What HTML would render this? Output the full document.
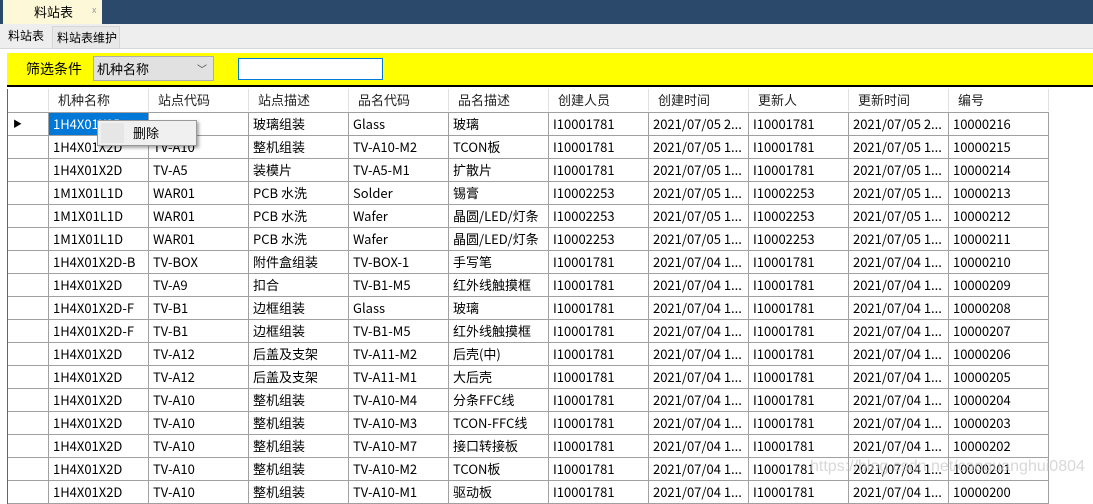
<!DOCTYPE html>
<html><head><meta charset="utf-8"><style>
*{margin:0;padding:0;box-sizing:border-box}
body{width:1093px;height:492px;overflow:hidden;background:#fff;font-family:"Noto Sans CJK SC","Liberation Sans",sans-serif;font-size:13px;color:#000;position:relative}
.top{position:absolute;left:0;top:0;width:1093px;height:24px;background:#2b4a6b}
.tab{position:absolute;left:3px;top:0;width:99px;height:24px;background:#fdf8d8;font-size:13px}
.tab span{position:absolute;left:31px;top:0;line-height:24px}
.tab i{position:absolute;left:89px;top:3px;font-style:normal;font-size:9px;color:#999}
.strip{position:absolute;left:0;top:24px;width:1093px;height:25px;background:#eeeeee;border-bottom:1px solid #d8d8d8}
.t1{position:absolute;left:8px;top:25px;font-size:12px;line-height:22px}
.t2{position:absolute;left:52px;top:26px;width:68px;height:23px;border:1px solid #d6d6d6;background:#e8e8e8;font-size:12px;line-height:21px;padding-left:4px}
.yel{position:absolute;left:7px;top:53px;width:1086px;height:34px;background:#ffff00;border-bottom:2px solid #000}
.lbl{position:absolute;left:26px;top:58px;font-size:14px;line-height:22px}
.sel{position:absolute;left:93px;top:56px;width:121px;height:25px;background:#e1e1e1;border:1px solid #adadad;font-size:13px;line-height:23px;padding-left:3px}
.sel b{position:absolute;right:6px;top:0;font-weight:normal;font-size:10px;color:#444}
.inp{position:absolute;left:238px;top:58px;width:145px;height:22px;background:#fff;border:1px solid #0078d7}
.grid{position:absolute;left:7px;top:89px;width:1042px;border-left:1px solid #666}
.row{position:relative;height:23px;border-bottom:1px solid #a0a0a0}
.row div{position:absolute;top:0;height:22px;line-height:22px;padding-left:4px;white-space:nowrap;overflow:hidden;border-right:1px solid #a0a0a0}
.hdr{height:24px;border-bottom:1px solid #a0a0a0}
.hdr div{border-right:1px solid #e0e0e0;padding-left:9px;color:#222}
.c0{left:0;width:41px}.c1{left:41px;width:100px}.c2{left:141px;width:100px}.c3{left:241px;width:100px}.c4{left:341px;width:100px}.c5{left:441px;width:100px}.c6{left:541px;width:100px}.c7{left:641px;width:100px}.c8{left:741px;width:100px}.c9{left:841px;width:100px}.c10{left:941px;width:100px}
.sel1{background:#0078d7;color:#fff}
.menu{position:absolute;left:97px;top:120px;width:100px;height:26px;background:#f0f0f0;border:1px solid #999;box-shadow:2px 2px 3px rgba(0,0,0,.35);font-size:13px}
.menu span{position:absolute;left:35px;top:0;line-height:24px}
.menu i{position:absolute;left:3px;top:2px;width:23px;height:20px;background:#e6e6e6}
.wm{position:absolute;left:810px;top:458px;color:rgba(200,200,200,.7);font-size:16px;font-family:"Liberation Sans",sans-serif}
</style></head><body>
<div class="top"><div class="tab"><span>料站表</span><i>x</i></div></div>
<div class="strip"></div>
<div class="t1">料站表</div><div class="t2">料站表维护</div>
<div class="yel"></div>
<div class="lbl">筛选条件</div>
<div class="sel">机种名称<b>﹀</b></div>
<div class="inp"></div>
<div class="grid">
<div class="row hdr"><div class="c0"></div><div class="c1">机种名称</div><div class="c2">站点代码</div><div class="c3">站点描述</div><div class="c4">品名代码</div><div class="c5">品名描述</div><div class="c6">创建人员</div><div class="c7">创建时间</div><div class="c8">更新人</div><div class="c9">更新时间</div><div class="c10">编号</div></div>
<div class="row"><div class="c0" style="padding-left:5px;font-size:9px">▶</div><div class="c1 sel1">1H4X01X2D</div><div class="c2"></div><div class="c3">玻璃组装</div><div class="c4">Glass</div><div class="c5">玻璃</div><div class="c6">I10001781</div><div class="c7">2021/07/05 2...</div><div class="c8">I10001781</div><div class="c9">2021/07/05 2...</div><div class="c10">10000216</div></div>
<div class="row"><div class="c0"></div><div class="c1">1H4X01X2D</div><div class="c2">TV-A10</div><div class="c3">整机组装</div><div class="c4">TV-A10-M2</div><div class="c5">TCON板</div><div class="c6">I10001781</div><div class="c7">2021/07/05 1...</div><div class="c8">I10001781</div><div class="c9">2021/07/05 1...</div><div class="c10">10000215</div></div>
<div class="row"><div class="c0"></div><div class="c1">1H4X01X2D</div><div class="c2">TV-A5</div><div class="c3">装模片</div><div class="c4">TV-A5-M1</div><div class="c5">扩散片</div><div class="c6">I10001781</div><div class="c7">2021/07/05 1...</div><div class="c8">I10001781</div><div class="c9">2021/07/05 1...</div><div class="c10">10000214</div></div>
<div class="row"><div class="c0"></div><div class="c1">1M1X01L1D</div><div class="c2">WAR01</div><div class="c3">PCB 水洗</div><div class="c4">Solder</div><div class="c5">锡膏</div><div class="c6">I10002253</div><div class="c7">2021/07/05 1...</div><div class="c8">I10002253</div><div class="c9">2021/07/05 1...</div><div class="c10">10000213</div></div>
<div class="row"><div class="c0"></div><div class="c1">1M1X01L1D</div><div class="c2">WAR01</div><div class="c3">PCB 水洗</div><div class="c4">Wafer</div><div class="c5">晶圆/LED/灯条</div><div class="c6">I10002253</div><div class="c7">2021/07/05 1...</div><div class="c8">I10002253</div><div class="c9">2021/07/05 1...</div><div class="c10">10000212</div></div>
<div class="row"><div class="c0"></div><div class="c1">1M1X01L1D</div><div class="c2">WAR01</div><div class="c3">PCB 水洗</div><div class="c4">Wafer</div><div class="c5">晶圆/LED/灯条</div><div class="c6">I10002253</div><div class="c7">2021/07/05 1...</div><div class="c8">I10002253</div><div class="c9">2021/07/05 1...</div><div class="c10">10000211</div></div>
<div class="row"><div class="c0"></div><div class="c1">1H4X01X2D-B</div><div class="c2">TV-BOX</div><div class="c3">附件盒组装</div><div class="c4">TV-BOX-1</div><div class="c5">手写笔</div><div class="c6">I10001781</div><div class="c7">2021/07/04 1...</div><div class="c8">I10001781</div><div class="c9">2021/07/04 1...</div><div class="c10">10000210</div></div>
<div class="row"><div class="c0"></div><div class="c1">1H4X01X2D</div><div class="c2">TV-A9</div><div class="c3">扣合</div><div class="c4">TV-B1-M5</div><div class="c5">红外线触摸框</div><div class="c6">I10001781</div><div class="c7">2021/07/04 1...</div><div class="c8">I10001781</div><div class="c9">2021/07/04 1...</div><div class="c10">10000209</div></div>
<div class="row"><div class="c0"></div><div class="c1">1H4X01X2D-F</div><div class="c2">TV-B1</div><div class="c3">边框组装</div><div class="c4">Glass</div><div class="c5">玻璃</div><div class="c6">I10001781</div><div class="c7">2021/07/04 1...</div><div class="c8">I10001781</div><div class="c9">2021/07/04 1...</div><div class="c10">10000208</div></div>
<div class="row"><div class="c0"></div><div class="c1">1H4X01X2D-F</div><div class="c2">TV-B1</div><div class="c3">边框组装</div><div class="c4">TV-B1-M5</div><div class="c5">红外线触摸框</div><div class="c6">I10001781</div><div class="c7">2021/07/04 1...</div><div class="c8">I10001781</div><div class="c9">2021/07/04 1...</div><div class="c10">10000207</div></div>
<div class="row"><div class="c0"></div><div class="c1">1H4X01X2D</div><div class="c2">TV-A12</div><div class="c3">后盖及支架</div><div class="c4">TV-A11-M2</div><div class="c5">后壳(中)</div><div class="c6">I10001781</div><div class="c7">2021/07/04 1...</div><div class="c8">I10001781</div><div class="c9">2021/07/04 1...</div><div class="c10">10000206</div></div>
<div class="row"><div class="c0"></div><div class="c1">1H4X01X2D</div><div class="c2">TV-A12</div><div class="c3">后盖及支架</div><div class="c4">TV-A11-M1</div><div class="c5">大后壳</div><div class="c6">I10001781</div><div class="c7">2021/07/04 1...</div><div class="c8">I10001781</div><div class="c9">2021/07/04 1...</div><div class="c10">10000205</div></div>
<div class="row"><div class="c0"></div><div class="c1">1H4X01X2D</div><div class="c2">TV-A10</div><div class="c3">整机组装</div><div class="c4">TV-A10-M4</div><div class="c5">分条FFC线</div><div class="c6">I10001781</div><div class="c7">2021/07/04 1...</div><div class="c8">I10001781</div><div class="c9">2021/07/04 1...</div><div class="c10">10000204</div></div>
<div class="row"><div class="c0"></div><div class="c1">1H4X01X2D</div><div class="c2">TV-A10</div><div class="c3">整机组装</div><div class="c4">TV-A10-M3</div><div class="c5">TCON-FFC线</div><div class="c6">I10001781</div><div class="c7">2021/07/04 1...</div><div class="c8">I10001781</div><div class="c9">2021/07/04 1...</div><div class="c10">10000203</div></div>
<div class="row"><div class="c0"></div><div class="c1">1H4X01X2D</div><div class="c2">TV-A10</div><div class="c3">整机组装</div><div class="c4">TV-A10-M7</div><div class="c5">接口转接板</div><div class="c6">I10001781</div><div class="c7">2021/07/04 1...</div><div class="c8">I10001781</div><div class="c9">2021/07/04 1...</div><div class="c10">10000202</div></div>
<div class="row"><div class="c0"></div><div class="c1">1H4X01X2D</div><div class="c2">TV-A10</div><div class="c3">整机组装</div><div class="c4">TV-A10-M2</div><div class="c5">TCON板</div><div class="c6">I10001781</div><div class="c7">2021/07/04 1...</div><div class="c8">I10001781</div><div class="c9">2021/07/04 1...</div><div class="c10">10000201</div></div>
<div class="row"><div class="c0"></div><div class="c1">1H4X01X2D</div><div class="c2">TV-A10</div><div class="c3">整机组装</div><div class="c4">TV-A10-M1</div><div class="c5">驱动板</div><div class="c6">I10001781</div><div class="c7">2021/07/04 1...</div><div class="c8">I10001781</div><div class="c9">2021/07/04 1...</div><div class="c10">10000200</div></div>
</div>
<div class="menu"><i></i><span>删除</span></div>
<div class="wm">https://blog.csdn.net/caoguanghui0804</div>
</body></html>
